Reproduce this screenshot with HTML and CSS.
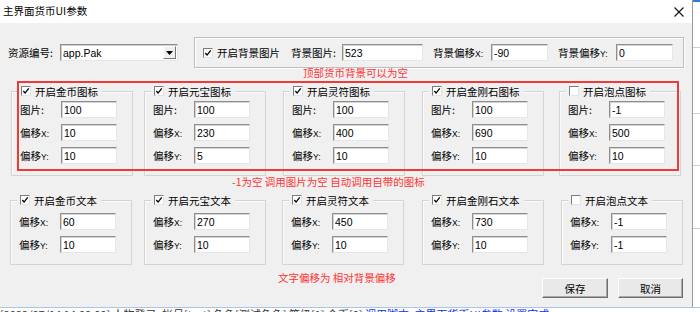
FILE: index.html
```html
<!DOCTYPE html>
<html lang="zh-CN">
<head>
<meta charset="utf-8">
<title>主界面货币UI参数</title>
<link rel="stylesheet" href="styles.css">
</head>
<body>
<div class="screen">
  <div class="top">
    <div class="dialog">
      <div class="titlebar">
        <span class="title">主界面货币UI参数</span>
        <svg class="close" width="10" height="10" viewBox="0 0 10 10"><path d="M0.5 0.5L9.5 9.5M9.5 0.5L0.5 9.5" stroke="#111" stroke-width="1.1" fill="none"/></svg>
      </div>
      <div class="client">
        <div class="row-top">
          <span class="lbl-res">资源编号:</span>
          <div class="combo"><span class="combo-text">app.Pak</span><span class="combo-btn"><svg width="7" height="4" viewBox="0 0 7 4"><path d="M0 0H7L3.5 4Z" fill="#000"/></svg></span></div>
          <div class="bgframe">
            <span class="cb on"><svg viewBox="0 0 9 9"><path d="M1.5 4.5L3.5 6.8L7.6 1.6" stroke="#000" stroke-width="1.5" fill="none"/></svg></span>
            <span class="cb-text">开启背景图片</span>
            <span class="bg-lbl l1">背景图片:</span>
            <input class="tb w81" type="text" value="523">
            <span class="bg-lbl l2">背景偏移<small>X:</small></span>
            <input class="tb w57" type="text" value="-90">
            <span class="bg-lbl l2">背景偏移<small>Y:</small></span>
            <input class="tb w57" type="text" value="0">
          </div>
        </div>
        <div class="note n1">顶部货币背景可以为空</div>

        <div class="groups row2">
          <div class="group">
            <div class="legend"><span class="cb on"><svg viewBox="0 0 9 9"><path d="M1.5 4.5L3.5 6.8L7.6 1.6" stroke="#000" stroke-width="1.5" fill="none"/></svg></span><span>开启金币图标</span></div>
            <div class="fields">
              <div class="field"><span class="flbl">图片:</span><input class="tb fi" type="text" value="100"></div>
              <div class="field"><span class="flbl">偏移<small>X:</small></span><input class="tb fi" type="text" value="10"></div>
              <div class="field"><span class="flbl">偏移<small>Y:</small></span><input class="tb fi" type="text" value="10"></div>
            </div>
          </div>
          <div class="group">
            <div class="legend"><span class="cb on"><svg viewBox="0 0 9 9"><path d="M1.5 4.5L3.5 6.8L7.6 1.6" stroke="#000" stroke-width="1.5" fill="none"/></svg></span><span>开启元宝图标</span></div>
            <div class="fields">
              <div class="field"><span class="flbl">图片:</span><input class="tb fi" type="text" value="100"></div>
              <div class="field"><span class="flbl">偏移<small>X:</small></span><input class="tb fi" type="text" value="230"></div>
              <div class="field"><span class="flbl">偏移<small>Y:</small></span><input class="tb fi" type="text" value="5"></div>
            </div>
          </div>
          <div class="group">
            <div class="legend"><span class="cb on"><svg viewBox="0 0 9 9"><path d="M1.5 4.5L3.5 6.8L7.6 1.6" stroke="#000" stroke-width="1.5" fill="none"/></svg></span><span>开启灵符图标</span></div>
            <div class="fields">
              <div class="field"><span class="flbl">图片:</span><input class="tb fi" type="text" value="100"></div>
              <div class="field"><span class="flbl">偏移<small>X:</small></span><input class="tb fi" type="text" value="400"></div>
              <div class="field"><span class="flbl">偏移<small>Y:</small></span><input class="tb fi" type="text" value="10"></div>
            </div>
          </div>
          <div class="group">
            <div class="legend"><span class="cb on"><svg viewBox="0 0 9 9"><path d="M1.5 4.5L3.5 6.8L7.6 1.6" stroke="#000" stroke-width="1.5" fill="none"/></svg></span><span>开启金刚石图标</span></div>
            <div class="fields">
              <div class="field"><span class="flbl">图片:</span><input class="tb fi" type="text" value="100"></div>
              <div class="field"><span class="flbl">偏移<small>X:</small></span><input class="tb fi" type="text" value="690"></div>
              <div class="field"><span class="flbl">偏移<small>Y:</small></span><input class="tb fi" type="text" value="10"></div>
            </div>
          </div>
          <div class="group">
            <div class="legend"><span class="cb"></span><span>开启泡点图标</span></div>
            <div class="fields">
              <div class="field"><span class="flbl">图片:</span><input class="tb fi" type="text" value="-1"></div>
              <div class="field"><span class="flbl">偏移<small>X:</small></span><input class="tb fi" type="text" value="500"></div>
              <div class="field"><span class="flbl">偏移<small>Y:</small></span><input class="tb fi" type="text" value="10"></div>
            </div>
          </div>
        </div>
        <div class="note n2">-1为空 调用图片为空 自动调用自带的图标</div>

        <div class="groups row3">
          <div class="group">
            <div class="legend"><span class="cb on"><svg viewBox="0 0 9 9"><path d="M1.5 4.5L3.5 6.8L7.6 1.6" stroke="#000" stroke-width="1.5" fill="none"/></svg></span><span>开启金币文本</span></div>
            <div class="fields">
              <div class="field"><span class="flbl">偏移<small>X:</small></span><input class="tb fi" type="text" value="60"></div>
              <div class="field"><span class="flbl">偏移<small>Y:</small></span><input class="tb fi" type="text" value="10"></div>
            </div>
          </div>
          <div class="group">
            <div class="legend"><span class="cb on"><svg viewBox="0 0 9 9"><path d="M1.5 4.5L3.5 6.8L7.6 1.6" stroke="#000" stroke-width="1.5" fill="none"/></svg></span><span>开启元宝文本</span></div>
            <div class="fields">
              <div class="field"><span class="flbl">偏移<small>X:</small></span><input class="tb fi" type="text" value="270"></div>
              <div class="field"><span class="flbl">偏移<small>Y:</small></span><input class="tb fi" type="text" value="10"></div>
            </div>
          </div>
          <div class="group">
            <div class="legend"><span class="cb on"><svg viewBox="0 0 9 9"><path d="M1.5 4.5L3.5 6.8L7.6 1.6" stroke="#000" stroke-width="1.5" fill="none"/></svg></span><span>开启灵符文本</span></div>
            <div class="fields">
              <div class="field"><span class="flbl">偏移<small>X:</small></span><input class="tb fi" type="text" value="450"></div>
              <div class="field"><span class="flbl">偏移<small>Y:</small></span><input class="tb fi" type="text" value="10"></div>
            </div>
          </div>
          <div class="group">
            <div class="legend"><span class="cb on"><svg viewBox="0 0 9 9"><path d="M1.5 4.5L3.5 6.8L7.6 1.6" stroke="#000" stroke-width="1.5" fill="none"/></svg></span><span>开启金刚石文本</span></div>
            <div class="fields">
              <div class="field"><span class="flbl">偏移<small>X:</small></span><input class="tb fi" type="text" value="730"></div>
              <div class="field"><span class="flbl">偏移<small>Y:</small></span><input class="tb fi" type="text" value="10"></div>
            </div>
          </div>
          <div class="group">
            <div class="legend"><span class="cb"></span><span>开启泡点文本</span></div>
            <div class="fields">
              <div class="field"><span class="flbl">偏移<small>X:</small></span><input class="tb fi" type="text" value="-1"></div>
              <div class="field"><span class="flbl">偏移<small>Y:</small></span><input class="tb fi" type="text" value="-1"></div>
            </div>
          </div>
        </div>

        <div class="footer">
          <div class="note n3">文字偏移为 相对背景偏移</div>
          <div class="buttons">
            <button class="btn b1" type="button">保存</button>
            <button class="btn b2" type="button">取消</button>
          </div>
        </div>

        <div class="redbox"></div>
      </div>
    </div>
    <div class="side"></div>
  </div>
  <div class="bottom"><div class="log"><span class="dark">[2022/07/14 14:00:00] 人物登录: 帐号[test] 角色[测试角色] 等级[1] 金币[0] </span><span class="blue">调用脚本: 主界面货币UI参数 设置完成</span></div></div>
</div>
</body>
</html>
```
FILE: styles.css
```css
* { box-sizing: border-box; }
html, body { margin: 0; padding: 0; }
body {
  background: #ffffff;
  font-family: "Noto Sans CJK SC", "Noto Sans", sans-serif;
  font-size: 10.5px;
  color: #000;
}
.screen { width: 700px; height: 312px; overflow: hidden; background: #fff; }
.top { display: flex; height: 307px; }
.dialog {
  width: 693px;
  height: 307px;
  border-right: 1px solid #9a9a9a;
  background: #f0f0f0;
  display: flex;
  flex-direction: column;
}
.titlebar {
  height: 23px;
  background: #fff;
  display: flex;
  align-items: center;
  justify-content: space-between;
  padding: 0 8px 0 3px;
}
.title { font-size: 10.5px; line-height: 14px; margin-top: -1px; }
.close { display: block; }
.client { position: relative; flex: 1; }

.row-top {
  display: flex;
  align-items: center;
  height: 31px;
  margin-top: 14px;
  padding-left: 8px;
}
.lbl-res { width: 52px; }
.combo {
  width: 118px;
  height: 17px;
  background: #fff;
  border: 1px solid;
  border-color: #8e8e8e #e6e6e6 #e6e6e6 #8e8e8e;
  box-shadow: inset 1px 1px 0 #cfcfcf;
  display: flex;
  align-items: center;
  justify-content: space-between;
  padding-left: 2px;
  padding-right: 1px;
}
.combo-text { font-family: "Liberation Sans", Arial, sans-serif; font-size: 10.5px; }
.combo-btn {
  width: 13px;
  height: 13px;
  background: #f0f0f0;
  border: 1px solid;
  border-color: #fff #777 #777 #fff;
  display: flex;
  align-items: center;
  justify-content: center;
}
.combo-btn svg { display: block; }

.bgframe {
  margin-left: 16px;
  width: 490px;
  height: 31px;
  border: 1px solid #bdbdbd;
  box-shadow: inset 1px 1px 0 #fff, 1px 1px 0 #fff;
  display: flex;
  align-items: center;
  padding-left: 8px;
}
.cb {
  width: 10px;
  height: 10px;
  flex: none;
  background: #fff;
  border: 1px solid;
  border-color: #7d7d7d #e3e3e3 #e3e3e3 #7d7d7d;
  display: inline-block;
  position: relative;
}
.cb svg { display: block; width: 8px; height: 8px; }
.cb-text { margin-left: 4px; width: 69px; }
.bg-lbl.l1 { width: 51px; margin-left: 5px; }
.bg-lbl.l2 { width: 58px; margin-left: 10px; }
small { font-family: "Liberation Sans", Arial, sans-serif; font-size: 8.5px; }

.tb {
  height: 17px;
  margin: 0;
  padding: 0 2px;
  background: #fff;
  border: 1px solid;
  border-color: #8e8e8e #e6e6e6 #e6e6e6 #8e8e8e;
  box-shadow: inset 1px 1px 0 #d4d4d4;
  font-family: "Liberation Sans", Arial, sans-serif;
  font-size: 10.5px;
  color: #000;
  outline: none;
}
.w81 { width: 81px; }
.w57 { width: 57px; }

.note {
  color: #ff3434;
  height: 14px;
  line-height: 14px;
  white-space: nowrap;
}
.n1 { margin-top: -2px; padding-left: 303px; }
.n2 { margin-top: -1px; padding-left: 232px; }

.groups { display: flex; }
.group {
  width: 122px;
  border: 1px solid #d4d4d4;
  box-shadow: inset 1px 1px 0 #fbfbfb;
  padding-bottom: 11px;
}
.legend {
  margin-top: -8px;
  margin-left: 6px;
  height: 14px;
  width: fit-content;
  background: #f0f0f0;
  display: flex;
  align-items: center;
  padding: 0 4px 0 3px;
  gap: 4px;
  white-space: nowrap;
}
.fields { display: flex; flex-direction: column; gap: 6px; padding-left: 8px; }
.field { display: flex; align-items: center; height: 17px; }
.flbl { width: 41px; }
.fi { width: 56px; }

.row2 { margin-top: 11px; }
.row2 .fields { margin-top: 3px; }
.row2 .group:nth-child(1) { margin-left: 11px; }
.row2 .group:nth-child(2) { margin-left: 11px; }
.row2 .group:nth-child(3) { margin-left: 17px; }
.row2 .group:nth-child(4) { margin-left: 17px; }
.row2 .group:nth-child(5) { margin-left: 15px; }

.row3 { margin-top: 11px; }
.row3 .fields { margin-top: 6px; }
.row3 .group:nth-child(1) { margin-left: 10px; }
.row3 .group:nth-child(2) { margin-left: 12px; }
.row3 .group:nth-child(3) { margin-left: 16px; }
.row3 .group:nth-child(4) { margin-left: 18px; }
.row3 .group:nth-child(5) { margin-left: 17px; }

.footer { display: flex; margin-top: 6px; }
.n3 { padding-left: 278px; flex: 1; }
.buttons { display: flex; gap: 10px; margin-top: 7px; margin-right: 9px; }
.btn {
  height: 20px;
  margin: 0;
  padding: 0;
  background: #e9e9e9;
  border: 1px solid;
  border-color: #fff #6e6e6e #6e6e6e #fff;
  box-shadow: inset -1px -1px 0 #a8a8a8;
  font-family: "Noto Sans CJK SC", sans-serif;
  font-size: 10.5px;
  color: #000;
}
.b1 { width: 66px; }
.b2 { width: 65px; }

.redbox {
  position: absolute;
  left: 17px;
  top: 58px;
  width: 662px;
  height: 90px;
  border: 2px solid #f03a3a;
  pointer-events: none;
}

.side {
  flex: 1;
  background:
    linear-gradient(#2a7fd4, #2a7fd4) 0 0 / 100% 2px no-repeat,
    linear-gradient(#cfcfcf, #cfcfcf) 0 47px / 100% 1px no-repeat,
    linear-gradient(#cfcfcf, #cfcfcf) 0 113px / 100% 1px no-repeat,
    linear-gradient(#cfcfcf, #cfcfcf) 0 165px / 100% 1px no-repeat,
    linear-gradient(#cfcfcf, #cfcfcf) 0 228px / 100% 1px no-repeat,
    #fff;
}
.bottom {
  height: 5px;
  border-top: 1px solid #a9c6ea;
  overflow: hidden;
  background: #fff;
}
.log {
  font-size: 11px;
  line-height: 12px;
  white-space: nowrap;
}
.dark { color: #333; }
.blue { color: #1030e0; }
```
